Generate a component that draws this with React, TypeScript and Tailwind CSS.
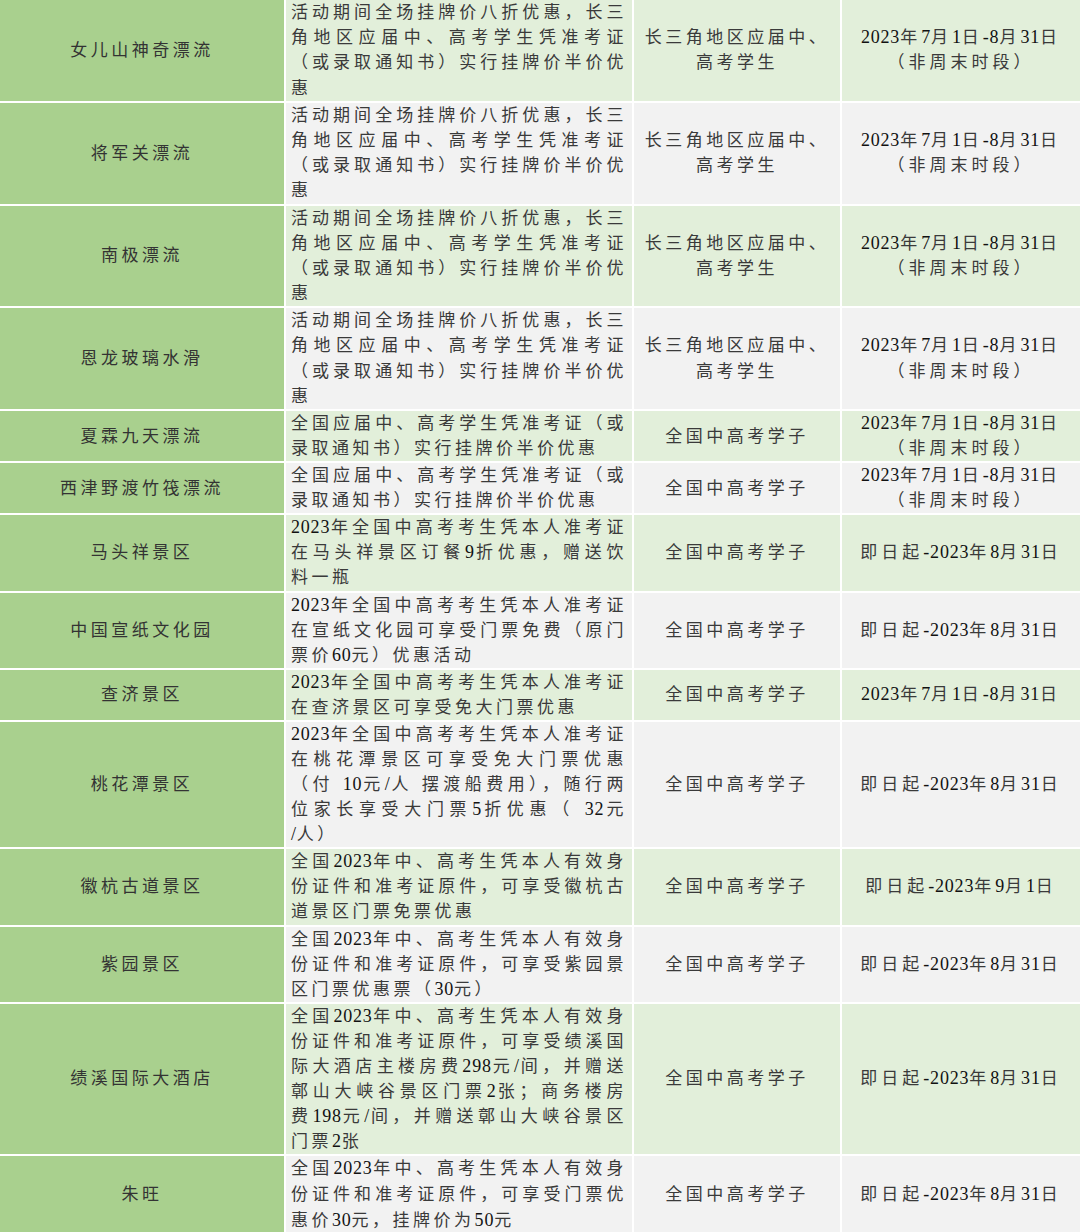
type Row = {
  name: string
  desc: string[]
  who: string[]
  when: string[]
}

const CSJ = ['长三角地区应届中、', '高考学生']
const ALL = ['全国中高考学子']
const SUMMER = ['2023年7月1日-8月31日', '（非周末时段）']
const TO831 = ['即日起-2023年8月31日']

const halfPrice = [
  '活动期间全场挂牌价八折优惠，长三',
  '角地区应届中、高考学生凭准考证',
  '（或录取通知书）实行挂牌价半价优',
  '惠',
]
const national = ['全国应届中、高考学生凭准考证（或', '录取通知书）实行挂牌价半价优惠']

const rows: Row[] = [
  { name: '女儿山神奇漂流', desc: halfPrice, who: CSJ, when: SUMMER },
  { name: '将军关漂流', desc: halfPrice, who: CSJ, when: SUMMER },
  { name: '南极漂流', desc: halfPrice, who: CSJ, when: SUMMER },
  { name: '恩龙玻璃水滑', desc: halfPrice, who: CSJ, when: SUMMER },
  { name: '夏霖九天漂流', desc: national, who: ALL, when: SUMMER },
  { name: '西津野渡竹筏漂流', desc: national, who: ALL, when: SUMMER },
  {
    name: '马头祥景区',
    desc: ['2023年全国中高考考生凭本人准考证', '在马头祥景区订餐9折优惠，赠送饮', '料一瓶'],
    who: ALL,
    when: TO831,
  },
  {
    name: '中国宣纸文化园',
    desc: ['2023年全国中高考考生凭本人准考证', '在宣纸文化园可享受门票免费（原门', '票价60元）优惠活动'],
    who: ALL,
    when: TO831,
  },
  {
    name: '查济景区',
    desc: ['2023年全国中高考考生凭本人准考证', '在查济景区可享受免大门票优惠'],
    who: ALL,
    when: ['2023年7月1日-8月31日'],
  },
  {
    name: '桃花潭景区',
    desc: [
      '2023年全国中高考考生凭本人准考证',
      '在桃花潭景区可享受免大门票优惠',
      '（付 10元/人 摆渡船费用），随行两',
      '位家长享受大门票5折优惠（ 32元',
      '/人）',
    ],
    who: ALL,
    when: TO831,
  },
  {
    name: '徽杭古道景区',
    desc: ['全国2023年中、高考生凭本人有效身', '份证件和准考证原件，可享受徽杭古', '道景区门票免票优惠'],
    who: ALL,
    when: ['即日起-2023年9月1日'],
  },
  {
    name: '紫园景区',
    desc: ['全国2023年中、高考生凭本人有效身', '份证件和准考证原件，可享受紫园景', '区门票优惠票（30元）'],
    who: ALL,
    when: TO831,
  },
  {
    name: '绩溪国际大酒店',
    desc: [
      '全国2023年中、高考生凭本人有效身',
      '份证件和准考证原件，可享受绩溪国',
      '际大酒店主楼房费298元/间，并赠送',
      '鄣山大峡谷景区门票2张；商务楼房',
      '费198元/间，并赠送鄣山大峡谷景区',
      '门票2张',
    ],
    who: ALL,
    when: TO831,
  },
  {
    name: '朱旺',
    desc: ['全国2023年中、高考生凭本人有效身', '份证件和准考证原件，可享受门票优', '惠价30元，挂牌价为50元'],
    who: ALL,
    when: TO831,
  },
]

// latin runs (digits, slashes) are set tighter and darker than the CJK text
function Txt({ s }: { s: string }) {
  const parts = s.split(/([0-9A-Za-z/\-.]+)/)
  return (
    <>
      {parts.map((p, i) =>
        i % 2 === 1 ? (
          <span key={i} className="text-[18px] leading-none tracking-[0.8px] text-[#111]">
            {p}
          </span>
        ) : (
          p
        )
      )}
    </>
  )
}

export default function App() {
  return (
    <div
      className="w-[1080px] h-[1232px] overflow-hidden bg-white text-[17px] leading-[25px] tracking-[3.5px] text-[#3a3a3a]"
      style={{ fontFamily: '"Liberation Serif", "Noto Sans CJK SC", serif' }}
    >
      <div className="grid grid-cols-[284px_346px_206px_238px] gap-[2px]">
        {rows.map((r, idx) => {
          const bg = idx % 2 === 0 ? 'bg-[#e2efda]' : 'bg-[#f2f2f2]'
          // the first four rows sit a touch looser than the rest
          const lh = idx < 4 ? 'h-[25.2px]' : idx === rows.length - 1 ? 'h-[25.8px]' : 'h-[25.08px]'
          return (
            <div key={idx} className="contents">
              <div className="flex items-center justify-center bg-[#a9d08e] text-[#333]">
                <div className={lh}>
                  <Txt s={r.name} />
                </div>
              </div>
              <div className={`px-[5px] ${bg}`}>
                {r.desc.map((line, i) => (
                  <div
                    key={i}
                    className={`${lh} ${
                      i < r.desc.length - 1 ? 'text-justify [text-align-last:justify]' : 'text-left'
                    }`}
                  >
                    <Txt s={line} />
                  </div>
                ))}
              </div>
              <div className={`flex flex-col items-center justify-center text-center ${bg}`}>
                {r.who.map((line, i) => (
                  <div key={i} className={lh}>
                    <Txt s={line} />
                  </div>
                ))}
              </div>
              <div className={`flex flex-col items-center justify-center text-center tracking-[4px] ${bg}`}>
                {r.when.map((line, i) => (
                  <div key={i} className={lh}>
                    <Txt s={line} />
                  </div>
                ))}
              </div>
            </div>
          )
        })}
      </div>
    </div>
  )
}
